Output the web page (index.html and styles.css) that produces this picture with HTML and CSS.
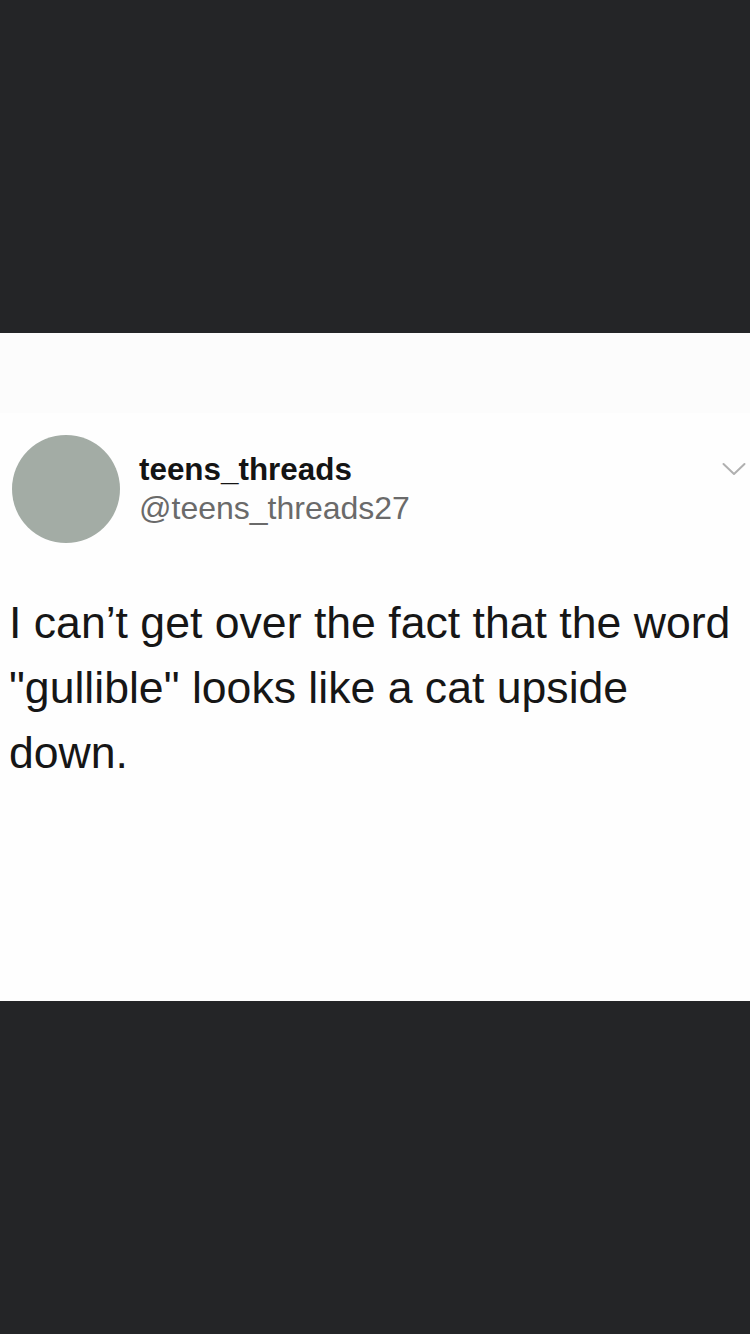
FILE: index.html
```html
<!DOCTYPE html>
<html lang="en">
<head>
<meta charset="utf-8">
<title>Tweet</title>
<link rel="stylesheet" href="styles.css">
</head>
<body>
  <div class="bar"></div>
  <main class="card">
    <div class="band"></div>
    <header class="head">
      <div class="avatar"></div>
      <div class="names">
        <div class="name">teens_threads</div>
        <div class="handle">@teens_threads27</div>
      </div>
      <svg class="chev" width="24" height="14" viewBox="0 0 24 14" aria-hidden="true">
        <path d="M1.5 2 L12 12 L22.5 2" fill="none" stroke="#b0b0b0" stroke-width="2" stroke-linecap="round" stroke-linejoin="round"/>
      </svg>
    </header>
    <p class="text">I can’t get over the fact that the word "gullible" looks like a cat upside down.</p>
  </main>
  <div class="bar bottom"></div>
</body>
</html>
```

FILE: styles.css
```css
html, body {
  margin: 0;
  padding: 0;
  background: #242527;
}
body {
  width: 750px;
  height: 1334px;
  overflow: hidden;
  font-family: "Liberation Sans", Arial, sans-serif;
}
.bar {
  height: 333px;
  background: #242527;
}
.bar.bottom {
  height: 333px;
}
.card {
  height: 668px;
  background: #fefefe;
  box-sizing: border-box;
}
.band {
  height: 80px;
  background: #fcfcfc;
}
.head {
  display: flex;
  align-items: center;
  margin-top: 22px;
  padding: 0 4px 0 12px;
}
.avatar {
  width: 108px;
  height: 108px;
  border-radius: 50%;
  background: #a3aca5;
  flex: none;
}
.names {
  margin-left: 19px;
  display: flex;
  flex-direction: column;
}
.name {
  font-weight: 700;
  font-size: 31.4px;
  line-height: 38px;
  color: #141414;
}
.handle {
  font-size: 32px;
  line-height: 38px;
  color: #6a6a6a;
}
.chev {
  margin-left: auto;
  align-self: flex-start;
  margin-top: 27px;
}
.text {
  margin: 47px 0 0;
  padding: 0 6px 0 9px;
  font-size: 44.6px;
  line-height: 65px;
  color: #161616;
}
```
